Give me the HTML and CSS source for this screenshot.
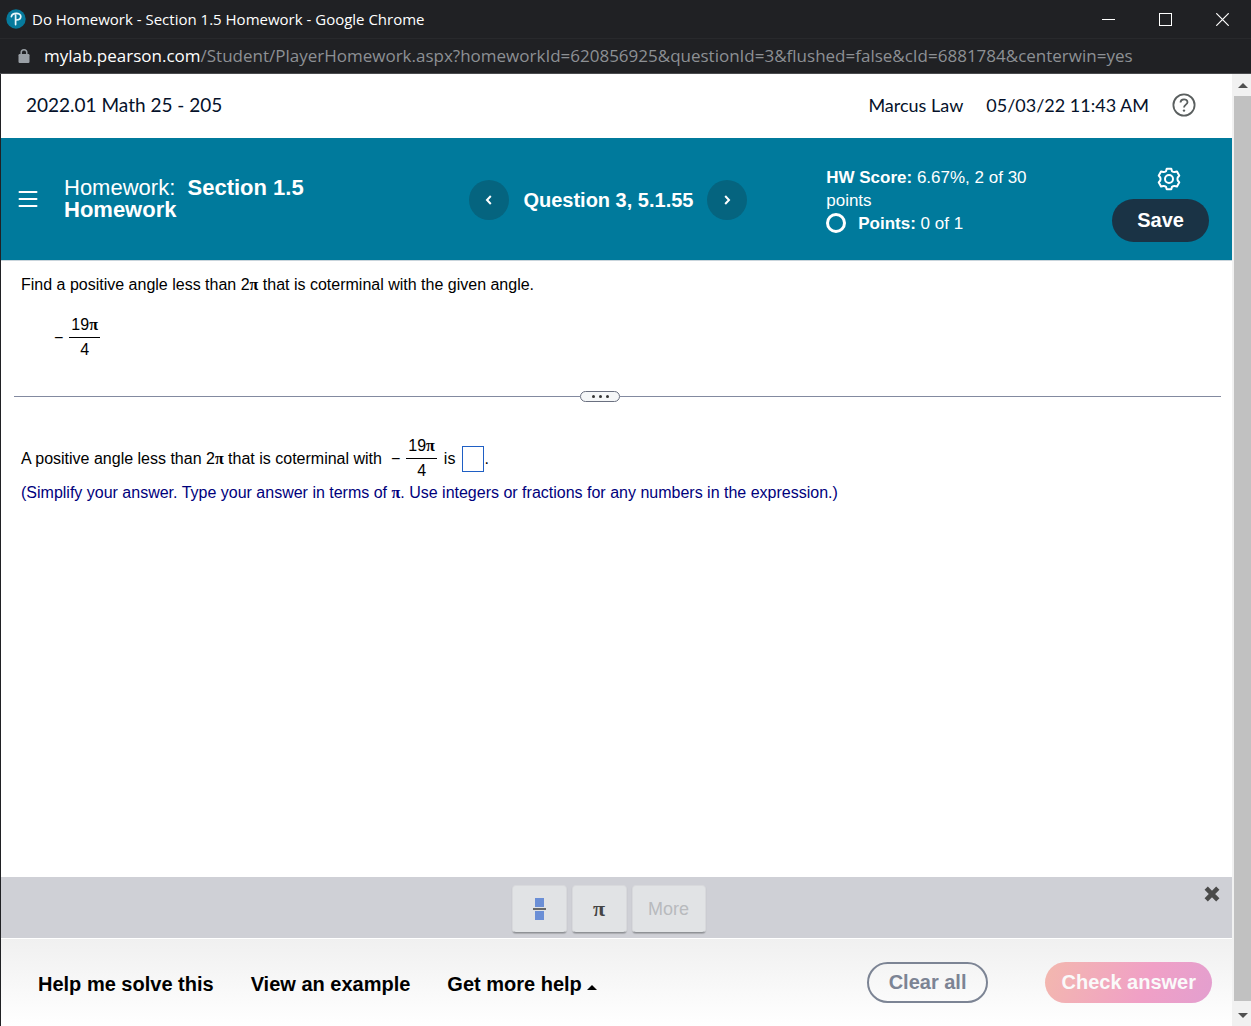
FILE: index.html
```html
<!DOCTYPE html>
<html lang="en">
<head>
    <meta charset="UTF-8">
    <title>Do Homework - Section 1.5 Homework</title>
    <link rel="stylesheet" href="styles.css">
</head>
<body>
<div class="titlebar">
    <svg class="logo" width="20" height="20" viewBox="0 0 20 20">
        <circle cx="10" cy="10" r="9.7" fill="#067a9c"/>
        <path d="M5.4 7.6C6 3.400 14.800 3.200 14.800 7.600C14.800 10.400 12 11 10.200 11M9.600 5.800V15.600" fill="none" stroke="#e8f6fa" stroke-width="1.7" stroke-linecap="round"/>
    </svg>
    <span class="window-title">Do Homework - Section 1.5 Homework - Google Chrome</span>
    <div class="window-btns">
        <button type="button" aria-label="Minimize"><svg width="13" height="13"><path d="M0 6.5H13" stroke="#fff"/></svg></button>
        <button type="button" aria-label="Maximize"><svg width="13" height="13"><rect x=".5" y=".5" width="12" height="12" fill="none" stroke="#fff"/></svg></button>
        <button type="button" aria-label="Close"><svg width="13" height="13"><path d="M.3.3L12.7 12.7M12.7.3L.3 12.7" stroke="#fff" stroke-width="1.2"/></svg></button>
    </div>
</div>
<div class="address">
    <svg width="12" height="15" viewBox="0 0 12 15">
        <path d="M3.2 6V3.6a2.8 2.8 0 0 1 5.6 0V6" fill="none" stroke="#9aa0a6" stroke-width="1.5"/>
        <rect x=".5" y="5" width="11" height="9" rx="1.2" fill="#9aa0a6"/>
    </svg>
    <span class="url"><b>mylab.pearson.com</b>/Student/PlayerHomework.aspx?homeworkId=620856925&amp;questionId=3&amp;flushed=false&amp;cId=6881784&amp;centerwin=yes</span>
</div>

<div class="view">
    <div class="page">
        <header class="course">
            <span class="course-name">2022.01 Math 25 - 205</span>
            <span>Marcus Law</span>
            <span>05/03/22 11:43 AM</span>
            <button type="button" class="help" aria-label="Help">
                <svg width="24" height="24" viewBox="0 0 24 24" fill="none" stroke="#5a5f5f" stroke-width="1.8">
                    <circle cx="12" cy="12" r="10.6"/>
                    <path d="M8.500 9.600C8.500 5.300 15.500 5.300 15.500 9.200C15.500 11.600 12 11.800 12 14.600"/>
                    <circle cx="12" cy="17.600" r="1.2" fill="#5a5f5f" stroke="none"/>
                </svg>
            </button>
        </header>

        <div class="banner">
            <button type="button" class="menu" aria-label="Menu">
                <svg width="20" height="18" viewBox="0 0 20 18"><path d="M1.5 2H18.5M1.5 9H18.5M1.5 16H18.5" stroke="#fff" stroke-width="2" stroke-linecap="round"/></svg>
            </button>
            <h1>Homework:&nbsp; <b>Section 1.5 Homework</b></h1>
            <nav>
                <button type="button" class="round" aria-label="Previous question">
                    <svg width="8" height="10" viewBox="0 0 8 10"><path d="M5.8 1L2 5L5.8 9" fill="none" stroke="#fff" stroke-width="2"/></svg>
                </button>
                <span>Question 3, 5.1.55</span>
                <button type="button" class="round" aria-label="Next question">
                    <svg width="8" height="10" viewBox="0 0 8 10"><path d="M2.2 1L6 5L2.2 9" fill="none" stroke="#fff" stroke-width="2"/></svg>
                </button>
            </nav>
            <div class="score">
                <p><b>HW Score:</b> 6.67%, 2 of 30 points</p>
                <p class="points"><i class="ring"></i><span><b>Points:</b> 0 of 1</span></p>
            </div>
            <div class="tools">
                <button type="button" class="gear" aria-label="Settings">
                    <svg width="24" height="24" viewBox="0 0 24 24" fill="none" stroke="#fff" stroke-width="2" stroke-linejoin="round">
                        <path d="M9.7 1.8H14.3L15 4.2Q16.3 5.2 17.6 5.1L20 4.6L22.3 8.7L20.7 10.5Q20.2 12 20.7 13.5L22.3 15.3L20 19.4L17.6 18.9Q16.3 18.8 15 19.8L14.3 22.2H9.7L9 19.8Q7.7 18.8 6.4 18.9L4 19.4L1.7 15.3L3.3 13.5Q3.8 12 3.3 10.5L1.7 8.7L4 4.6L6.4 5.1Q7.7 5.2 9 4.2Z"/>
                        <circle cx="12" cy="12" r="4"/>
                    </svg>
                </button>
                <button type="button" class="save">Save</button>
            </div>
        </div>

        <main>
            <section class="question">
                <p>Find a positive angle less than 2<span class="pi">π</span> that is coterminal with the given angle.</p>
                <div class="math given">
                    <span>−</span>
                    <span class="frac"><span>19<span class="pi">π</span></span><span>4</span></span>
                </div>
            </section>
            <div class="divider">
                <button type="button" aria-label="Resize"><i></i><i></i><i></i></button>
            </div>
            <section class="answer">
                <div class="math">
                    <label for="ans">A positive angle less than 2<span class="pi">π</span> that is coterminal with</label>
                    <span class="minus">−</span>
                    <span class="frac"><span>19<span class="pi">π</span></span><span>4</span></span>
                    <span class="is">is</span>
                    <input type="text" id="ans">
                    <span>.</span>
                </div>
                <p class="hint">(Simplify your answer. Type your answer in terms of <span class="pi">π</span>. Use integers or fractions for any numbers in the expression.)</p>
            </section>
        </main>

        <div class="palette">
            <button type="button" class="key" aria-label="Fraction">
                <svg width="13" height="22" viewBox="0 0 13 22"><path d="M2 0H11V9H2ZM2 13H11V22H2Z" fill="#6b8fd6"/><path d="M0 11H13" stroke="#333" stroke-width="1.4"/></svg>
            </button>
            <button type="button" class="key pi">π</button>
            <button type="button" class="key more" disabled>More</button>
            <button type="button" class="close" aria-label="Close palette">
                <svg width="16" height="16" viewBox="0 0 16 16"><path d="M2.2 2.2L13.8 13.8M13.8 2.2L2.2 13.8" stroke="#4a4a4a" stroke-width="4.6"/></svg>
            </button>
        </div>

        <footer>
            <a href="#">Help me solve this</a>
            <a href="#">View an example</a>
            <a href="#">Get more help <svg width="10" height="5" viewBox="0 0 10 5"><path d="M0 5L5 0L10 5Z"/></svg></a>
            <button type="button" class="clear">Clear all</button>
            <button type="button" class="check">Check answer</button>
        </footer>
    </div>

    <div class="scrollbar">
        <svg width="10" height="5" viewBox="0 0 10 5"><path d="M0 5L5 0L10 5Z" fill="#505050"/></svg>
        <div class="thumb"></div>
        <svg width="10" height="5" viewBox="0 0 10 5"><path d="M0 0L5 5L10 0Z" fill="#505050"/></svg>
    </div>
</div>
</body>
</html>
```
FILE: styles.css
```css
*{
    margin: 0;
    padding: 0;
    box-sizing: border-box;
}
body{
    display: flex;
    flex-direction: column;
    height: 100vh;
    background: #202124;
    color: #000;
    font: 16px/20px "Liberation Sans", Arial, sans-serif;
}
button{
    border: 0;
    background: none;
    font-family: inherit;
    cursor: pointer;
}
svg{
    display: block;
}

/* browser window */
.titlebar{
    display: flex;
    align-items: center;
    height: 39px;
    padding-left: 6px;
    gap: 6px;
    border-bottom: 1px solid #28292c;
    color: #fff;
    font: 15px/20px "Open Sans", sans-serif;
}
.window-title{
    flex: 1;
    white-space: nowrap;
}
.window-btns{
    display: flex;
}
.window-btns button{
    display: flex;
    justify-content: center;
    width: 57px;
}
.address{
    display: flex;
    align-items: center;
    height: 35px;
    padding-left: 18px;
    gap: 14px;
    border-bottom: 1px solid #4a4b4e;
    color: #8d9094;
    font: 17px/24px "Open Sans", sans-serif;
}
.url{
    white-space: nowrap;
}
.url b{
    color: #fff;
    font-weight: normal;
}
.view{
    display: flex;
    flex: 1;
    min-height: 0;
    padding-left: 1px;
}
.page{
    display: flex;
    flex-direction: column;
    flex: 1;
    background: #fff;
}
.scrollbar{
    display: flex;
    flex-direction: column;
    align-items: center;
    width: 19px;
    padding: 9px 0 8px 2px;
    gap: 8px;
    background: #f1f1f1;
}
.thumb{
    flex: 1;
    width: 100%;
    margin-bottom: 4px;
    background: #c1c1c1;
}

/* course line */
.course{
    display: flex;
    align-items: center;
    height: 64px;
    padding: 0 36px 2px 25px;
    gap: 23px;
    color: #05112a;
    font: 18px/24px Lato, sans-serif;
}
.course-name{
    flex: 1;
    font-size: 19px;
}

/* banner */
.banner{
    display: grid;
    grid-template-columns: 46px 3fr 4fr 2fr 165px;
    align-items: center;
    height: 123px;
    padding: 0 23px 0 17px;
    border-bottom: 1px solid #c9d5dc;
    background: #007a9c;
    color: #fff;
}
.banner h1{
    max-width: 260px;
    font-size: 22px;
    line-height: 22px;
    font-weight: normal;
}
.banner nav{
    display: flex;
    align-items: center;
    justify-content: center;
    gap: 14px;
    padding-top: 2px;
    font-size: 20px;
    font-weight: bold;
    white-space: nowrap;
}
.round{
    display: flex;
    align-items: center;
    justify-content: center;
    width: 40px;
    height: 40px;
    border-radius: 50%;
    background: #05647f;
}
.score{
    padding-top: 2px;
    font-size: 17px;
    line-height: 23px;
}
.points{
    display: flex;
    align-items: center;
    gap: 12px;
}
.ring{
    width: 20px;
    height: 20px;
    border: 3px solid #fff;
    border-radius: 50%;
}
.tools{
    display: flex;
    flex-direction: column;
    align-items: flex-end;
    gap: 8px;
    padding-top: 10px;
}
.gear{
    padding-right: 28px;
}
.save{
    height: 43px;
    padding: 0 25px;
    border-radius: 22px;
    background: #1a3345;
    color: #fff;
    font-size: 20px;
    font-weight: bold;
}

/* exercise */
main{
    flex: 1;
}
.question{
    height: 130px;
    padding: 14px 20px;
}
.pi{
    font-family: "Liberation Serif", serif;
    font-weight: bold;
}
.math{
    display: flex;
    align-items: center;
}
.given{
    gap: 6px;
    margin-top: 18px;
    padding-left: 33px;
}
.frac{
    display: flex;
    flex-direction: column;
    text-align: center;
}
.frac > span{
    padding: 0 2px;
    line-height: 24px;
}
.frac > span:first-child{
    border-bottom: 1px solid #000;
}
.divider{
    display: flex;
    align-items: center;
    margin: 0 11px 0 13px;
}
.divider:before, .divider:after{
    content: "";
    flex: 566;
    height: 1px;
    background: #838aa0;
}
.divider:after{
    flex: 601;
}
.divider button{
    display: flex;
    align-items: center;
    justify-content: center;
    gap: 4px;
    width: 40px;
    height: 11px;
    border: 1px solid #6a7080;
    border-radius: 6px;
    background: #f5f7f8;
}
.divider i{
    width: 3px;
    height: 3px;
    border-radius: 50%;
    background: #333;
}
.answer{
    padding: 32px 20px;
}
.minus{
    margin: 0 6px 0 9px;
}
.is{
    margin: 0 7px;
}
.math input{
    width: 22px;
    height: 26px;
    border: 1px solid #1f5fc4;
    background: #fff;
}
.hint{
    color: #00007c;
}

/* symbol palette */
.palette{
    display: flex;
    justify-content: center;
    position: relative;
    height: 62px;
    padding-top: 8px;
    padding-right: 16px;
    gap: 5px;
    border-bottom: 1px solid #fff;
    background: #cfd0d6;
}
.key{
    display: flex;
    align-items: center;
    justify-content: center;
    width: 55px;
    height: 48px;
    border: 1px solid #d8d9dc;
    border-bottom-color: #8f9296;
    border-radius: 4px;
    background: #e1e3e5;
    box-shadow: 0 1px 1px #aaabb0;
    color: #444;
    font-size: 22px;
}
.more{
    width: 74px;
    color: #b8babd;
    font-size: 18px;
}
.close{
    position: absolute;
    top: 9px;
    right: 12px;
}

/* bottom bar */
footer{
    display: flex;
    align-items: center;
    height: 87px;
    padding: 0 20px 0 37px;
    background: linear-gradient(#f0f0f0, #fff);
    font-size: 20px;
    font-weight: bold;
    white-space: nowrap;
}
footer a{
    margin-right: 37px;
    padding-top: 2px;
    color: #000;
    text-decoration: none;
}
footer svg{
    display: inline-block;
    vertical-align: 1px;
}
.clear, .check{
    height: 41px;
    border-radius: 21px;
    font-size: 20px;
    font-weight: bold;
}
.clear{
    margin: 0 57px 0 auto;
    padding: 0 20px;
    border: 2px solid #7c8494;
    color: #7c8494;
}
.check{
    padding: 0 16px;
    background: linear-gradient(110deg, #f3b8ae, #f0a0c6 60%, #e39fcf);
    color: #fafafa;
}
```
